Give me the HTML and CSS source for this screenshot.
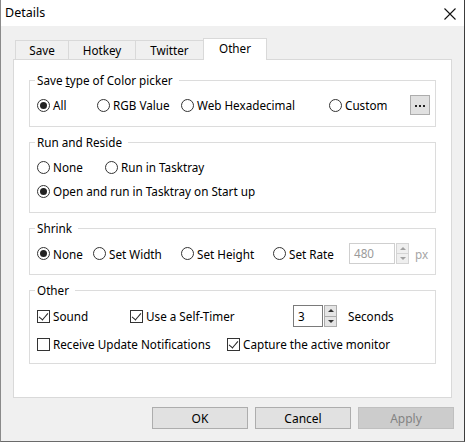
FILE: index.html
```html
<!DOCTYPE html>
<html>
<head>
<meta charset="utf-8">
<link rel="stylesheet" href="styles.css">
</head>
<body>
<div class="window">
  <div class="titlebar">
    <span class="title">Details</span>
    <svg class="close" width="12" height="12" viewBox="0 0 12 12"><path d="M0.5 0.5 L11.5 11.5 M11.5 0.5 L0.5 11.5" stroke="#111" stroke-width="1.1" fill="none"/></svg>
  </div>
  <div class="body">
    <div class="tabs">
      <div class="tab tab-save">Save</div>
      <div class="tab tab-hotkey">Hotkey</div>
      <div class="tab tab-twitter">Twitter</div>
      <div class="tab tab-other active">Other</div>
    </div>
    <div class="panel">
      <fieldset class="group g1">
        <legend>Save <u>t</u>ype of Color picker</legend>
        <div class="row row-color">
          <label class="opt"><span class="radio checked"></span>All</label>
          <label class="opt"><span class="radio"></span>RGB Value</label>
          <label class="opt"><span class="radio"></span>Web Hexadecimal</label>
          <label class="opt"><span class="radio"></span>Custom</label>
          <button class="dots"><i></i><i></i><i></i></button>
        </div>
      </fieldset>
      <fieldset class="group g2">
        <legend>Run and Reside</legend>
        <div class="row row-run">
          <label class="opt"><span class="radio"></span>None</label>
          <label class="opt"><span class="radio"></span>Run in Tasktray</label>
        </div>
        <div class="row">
          <label class="opt"><span class="radio checked"></span>Open and run in Tasktray on Start up</label>
        </div>
      </fieldset>
      <fieldset class="group g3">
        <legend>Shrink</legend>
        <div class="row row-shrink">
          <label class="opt"><span class="radio checked"></span>None</label>
          <label class="opt"><span class="radio"></span>Set Width</label>
          <label class="opt"><span class="radio"></span>Set Height</label>
          <label class="opt"><span class="radio"></span>Set Rate</label>
          <div class="num num-rate disabled">480</div>
          <div class="spin disabled"><span class="up"></span><span class="down"></span></div>
          <span class="unit">px</span>
        </div>
      </fieldset>
      <fieldset class="group g4">
        <legend>Other</legend>
        <div class="row row-other1">
          <label class="opt"><span class="check checked"></span>Sound</label>
          <label class="opt"><span class="check checked"></span>Use a Self-Timer</label>
          <div class="num num-timer">3</div>
          <div class="spin"><span class="up"></span><span class="down"></span></div>
          <span class="secs">Seconds</span>
        </div>
        <div class="row row-other2">
          <label class="opt"><span class="check"></span>Receive Update Notifications</label>
          <label class="opt"><span class="check checked"></span>Capture the active monitor</label>
        </div>
      </fieldset>
    </div>
    <div class="buttons">
      <button class="btn">OK</button>
      <button class="btn">Cancel</button>
      <button class="btn btn-disabled">Apply</button>
    </div>
  </div>
</div>
</body>
</html>
```

FILE: styles.css
```css
* { box-sizing: border-box; }
html, body { margin: 0; padding: 0; background: #f0f0f0; }
body {
  font-family: "Noto Sans", "Open Sans", sans-serif;
  font-size: 11.7px;
  color: #000;
}
.window {
  width: 465px;
  height: 442px;
  background: #f0f0f0;
  border-left: 1px solid #8a8a8a;
  border-right: 1px solid #3c3c3c;
  border-bottom: 1px solid #6a6a6a;
  display: flex;
  flex-direction: column;
}
.titlebar {
  height: 26px;
  background: #fff;
  display: flex;
  align-items: center;
  justify-content: space-between;
  padding: 0 8px 0 4px;
}
.title { font-size: 12.5px; line-height: 26px; }
.close { display: block; margin-top: 2px; }

.body {
  padding: 12px 10px 0 12px;
  display: flex;
  flex-direction: column;
}
.tabs {
  display: flex;
  align-items: flex-end;
  height: 21px;
  padding-left: 2px;
}
.tab {
  height: 19px;
  border: 1px solid #d9d9d9;
  border-bottom: none;
  background: #f0f0f0;
  text-align: center;
  line-height: 18px;
  margin-left: -1px;
}
.tab:first-child { margin-left: 0; }
.tab-save { width: 54px; }
.tab-hotkey { width: 68px; }
.tab-twitter { width: 69px; }
.tab-other { width: 64px; }
.tab.active {
  height: 22px;
  background: #fff;
  margin-bottom: -1px;
  position: relative;
  z-index: 1;
  line-height: 18px;
}
.panel {
  width: 439px;
  height: 339px;
  background: #fff;
  border: 1px solid #d9d9d9;
  padding: 12px 15px 0 15px;
  display: flex;
  flex-direction: column;
  gap: 7px;
}
.group {
  margin: 0;
  width: 407px;
  min-width: 0;
  border: 1px solid #dcdcdc;
  padding: 7px 7px 11px 7px;
}
.group legend {
  padding: 0 6px 0 2px;
  margin-left: -2px;
  line-height: 16px;
}
.g4 { padding-bottom: 9px; }
.row {
  display: flex;
  align-items: center;
  height: 20px;
}
.g2 .row + .row { margin-top: 4px; }
.g4 .row + .row { margin-top: 8px; }
.row-other1 { height: 21px; }

.opt {
  display: flex;
  align-items: center;
  gap: 3px;
  white-space: nowrap;
}
.row-color { display: grid; grid-template-columns: 60px 84px 148px 81px 20px; }
.row-run { display: grid; grid-template-columns: 68px auto; }
.row-shrink { display: grid; grid-template-columns: 56px 88px 92px 76px 46px 14px auto; }
.row-other1 { display: grid; grid-template-columns: 93px 163px 30px 14px auto; }
.row-other2 { display: grid; grid-template-columns: 190px auto; }

.radio {
  width: 13px;
  height: 13px;
  border: 1px solid #333;
  border-radius: 50%;
  background: #fff;
  flex: none;
  display: flex;
  align-items: center;
  justify-content: center;
}
.radio.checked::after {
  content: "";
  width: 7px;
  height: 7px;
  border-radius: 50%;
  background: #222;
}
.check {
  width: 13px;
  height: 13px;
  border: 1px solid #333;
  background: #fff;
  flex: none;
  position: relative;
}
.check.checked::after {
  content: "";
  position: absolute;
  left: 3px;
  top: 0px;
  width: 4px;
  height: 8px;
  border-right: 1px solid #222;
  border-bottom: 1px solid #222;
  transform: rotate(40deg);
}
.dots {
  width: 20px;
  height: 20px;
  margin: 0;
  padding: 0;
  background: #e1e1e1;
  border: 1px solid #adadad;
  display: flex;
  align-items: center;
  justify-content: center;
  gap: 2px;
  padding-top: 1px;
}
.dots i {
  display: block;
  width: 2px;
  height: 2px;
  background: #222;
}
.num {
  height: 21px;
  border: 1px solid #7a7a7a;
  background: #fff;
  padding-left: 4px;
  line-height: 19px;
}
.num.disabled { border-color: #cfcfcf; color: #9a9a9a; }
.num-timer { height: 22px; line-height: 20px; }
.spin {
  display: flex;
  flex-direction: column;
  height: 21px;
  width: 13px;
  margin-left: 1px;
}
.row-other1 .spin { height: 22px; }
.spin span {
  flex: 1;
  background: #e5e5e5;
  border: 1px solid #acacac;
  display: flex;
  align-items: center;
  justify-content: center;
}
.spin span + span { border-top: none; }
.spin .up::after {
  content: "";
  border-left: 3px solid transparent;
  border-right: 3px solid transparent;
  border-bottom: 3px solid #333;
}
.spin .down::after {
  content: "";
  border-left: 3px solid transparent;
  border-right: 3px solid transparent;
  border-top: 3px solid #333;
}
.spin.disabled span { background: #efefef; border-color: #d4d4d4; }
.spin.disabled .up::after { border-bottom-color: #a0a0a0; }
.spin.disabled .down::after { border-top-color: #a0a0a0; }
.unit { color: #a5a5a5; padding-left: 6px; }
.secs { padding-left: 11px; }

.buttons {
  display: flex;
  justify-content: flex-end;
  gap: 7px;
  margin-top: 9px;
}
.btn {
  width: 96px;
  height: 22px;
  margin: 0;
  padding: 0;
  background: #e1e1e1;
  border: 1px solid #adadad;
  font-family: inherit;
  font-size: 12px;
  color: #000;
}
.btn-disabled {
  background: #cccccc;
  border-color: #bfbfbf;
  color: #838383;
}
```
